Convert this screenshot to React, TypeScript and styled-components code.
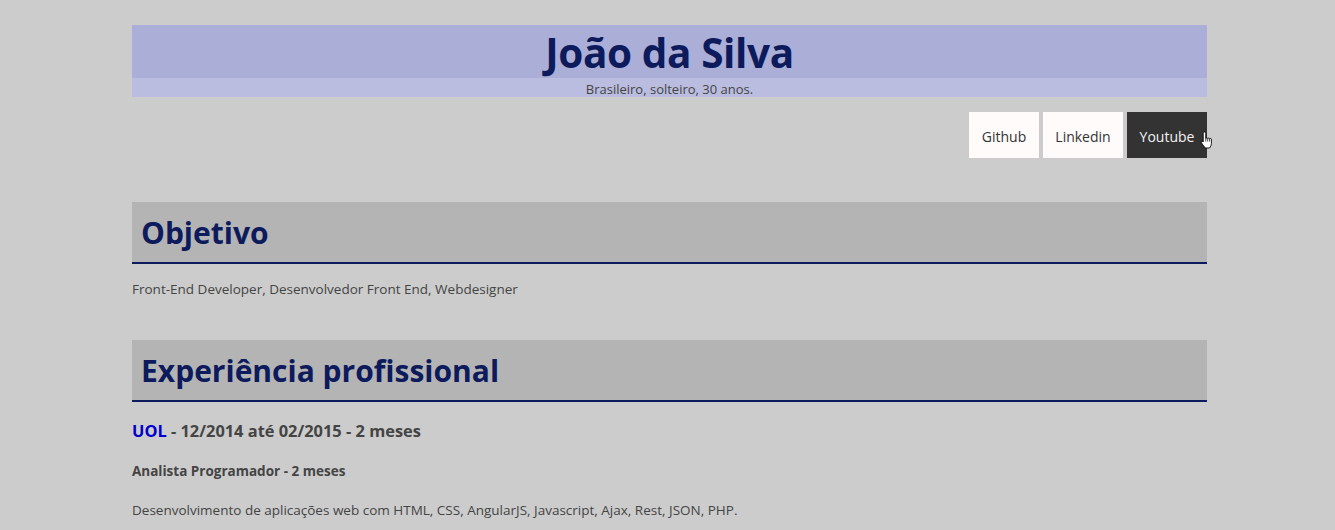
import React from "react";
import styled, { createGlobalStyle } from "styled-components";

const Global = createGlobalStyle`
  html, body { margin: 0; padding: 0; }
  body {
    background: #cccccc;
    font-family: "Open Sans", "Noto Sans", sans-serif;
    color: #444;
  }
`;

const Page = styled.div`
  width: 1075px;
  margin-left: calc(50% - 535.5px);
  padding-top: 25px;
`;

const Header = styled.header`
  text-align: center;
`;

const Name = styled.h1`
  margin: 0;
  height: 53px;
  background: #abafd7;
  color: #0d1a5c;
  font-size: 40.5px;
  font-weight: 700;
  line-height: 55px;
  letter-spacing: -0.4px;
`;

const Subtitle = styled.p`
  margin: 0;
  height: 19px;
  background: #babde0;
  font-size: 13px;
  line-height: 22px;
  color: #444;
`;

const Links = styled.nav`
  display: flex;
  justify-content: flex-end;
  gap: 4px;
  margin-top: 15px;
`;

const LinkButton = styled.a<{ $active?: boolean; $w: number }>`
  position: relative;
  display: flex;
  align-items: center;
  justify-content: center;
  width: ${(p) => p.$w}px;
  height: 46px;
  padding-top: 2px;
  box-sizing: border-box;
  background: ${(p) => (p.$active ? "#333333" : "#fffbfb")};
  color: ${(p) => (p.$active ? "#f2f2f2" : "#333")};
  font-size: 14px;
  text-decoration: none;
`;

const Cursor = styled.svg`
  position: absolute;
  left: 73px;
  top: 19px;
  width: 13px;
  height: 18px;
`;

const Section = styled.section<{ $gap: number }>`
  margin-top: ${(p) => p.$gap}px;
`;

const SectionTitle = styled.h2`
  margin: 0;
  height: 60px;
  box-sizing: content-box;
  background: #b4b4b4;
  border-bottom: 2px solid #0d1a5c;
  color: #0d1a5c;
  font-size: 30px;
  font-weight: 700;
  line-height: 62px;
  padding-left: 9px;
`;

const Text = styled.p`
  margin: 15px 0 0;
  font-size: 13.5px;
  line-height: 20px;
  color: #444;
`;

const JobHead = styled.h3`
  margin: 18px 0 0;
  font-size: 16.4px;
  font-weight: 700;
  color: #444;
  line-height: 22px;
`;

const Company = styled.span`
  color: #0000cc;
`;

const Role = styled.h4`
  margin: 19px 0 0;
  font-size: 13.5px;
  font-weight: 700;
  line-height: 20px;
  color: #444;
`;

const Desc = styled.p`
  margin: 19px 0 0;
  font-size: 13.5px;
  line-height: 20px;
  color: #444;
`;

export default function App() {
  return (
    <>
      <Global />
      <Page>
        <Header>
          <Name>João da Silva</Name>
          <Subtitle>Brasileiro, solteiro, 30 anos.</Subtitle>
        </Header>
        <Links>
          <LinkButton $w={70} href="#">Github</LinkButton>
          <LinkButton $w={80} href="#">Linkedin</LinkButton>
          <LinkButton $w={80} $active href="#">
            Youtube
            <Cursor viewBox="0 0 13 18">
              <path
                d="M4.5 1C5.3 1 5.8 1.5 5.8 2.3V7.5C6 6.8 7.5 6.8 7.7 7.6C7.9 6.9 9.4 6.9 9.6 7.8C9.9 7.2 11.3 7.3 11.4 8.2V12.5C11.4 14.5 10.2 16 9.6 17H5.2C4.4 15.8 2.5 13.5 1.4 11.8C0.8 10.8 1.6 9.8 2.6 10.4L3.2 11V2.3C3.2 1.5 3.7 1 4.5 1Z"
                fill="#fff"
                stroke="#000"
                strokeWidth="0.9"
                strokeLinejoin="round"
              />
              <path d="M5.8 7.5V10.5M7.7 7.6V10.5M9.6 7.8V10.5" stroke="#000" strokeWidth="0.7" />
            </Cursor>
          </LinkButton>
        </Links>
        <Section $gap={44}>
          <SectionTitle>Objetivo</SectionTitle>
          <Text>Front-End Developer, Desenvolvedor Front End, Webdesigner</Text>
        </Section>
        <Section $gap={41}>
          <SectionTitle>Experiência profissional</SectionTitle>
          <JobHead>
            <Company>UOL</Company> - 12/2014 até 02/2015 - 2 meses
          </JobHead>
          <Role>Analista Programador - 2 meses</Role>
          <Desc>
            Desenvolvimento de aplicações web com HTML, CSS, AngularJS, Javascript, Ajax, Rest, JSON, PHP.
          </Desc>
        </Section>
      </Page>
    </>
  );
}
